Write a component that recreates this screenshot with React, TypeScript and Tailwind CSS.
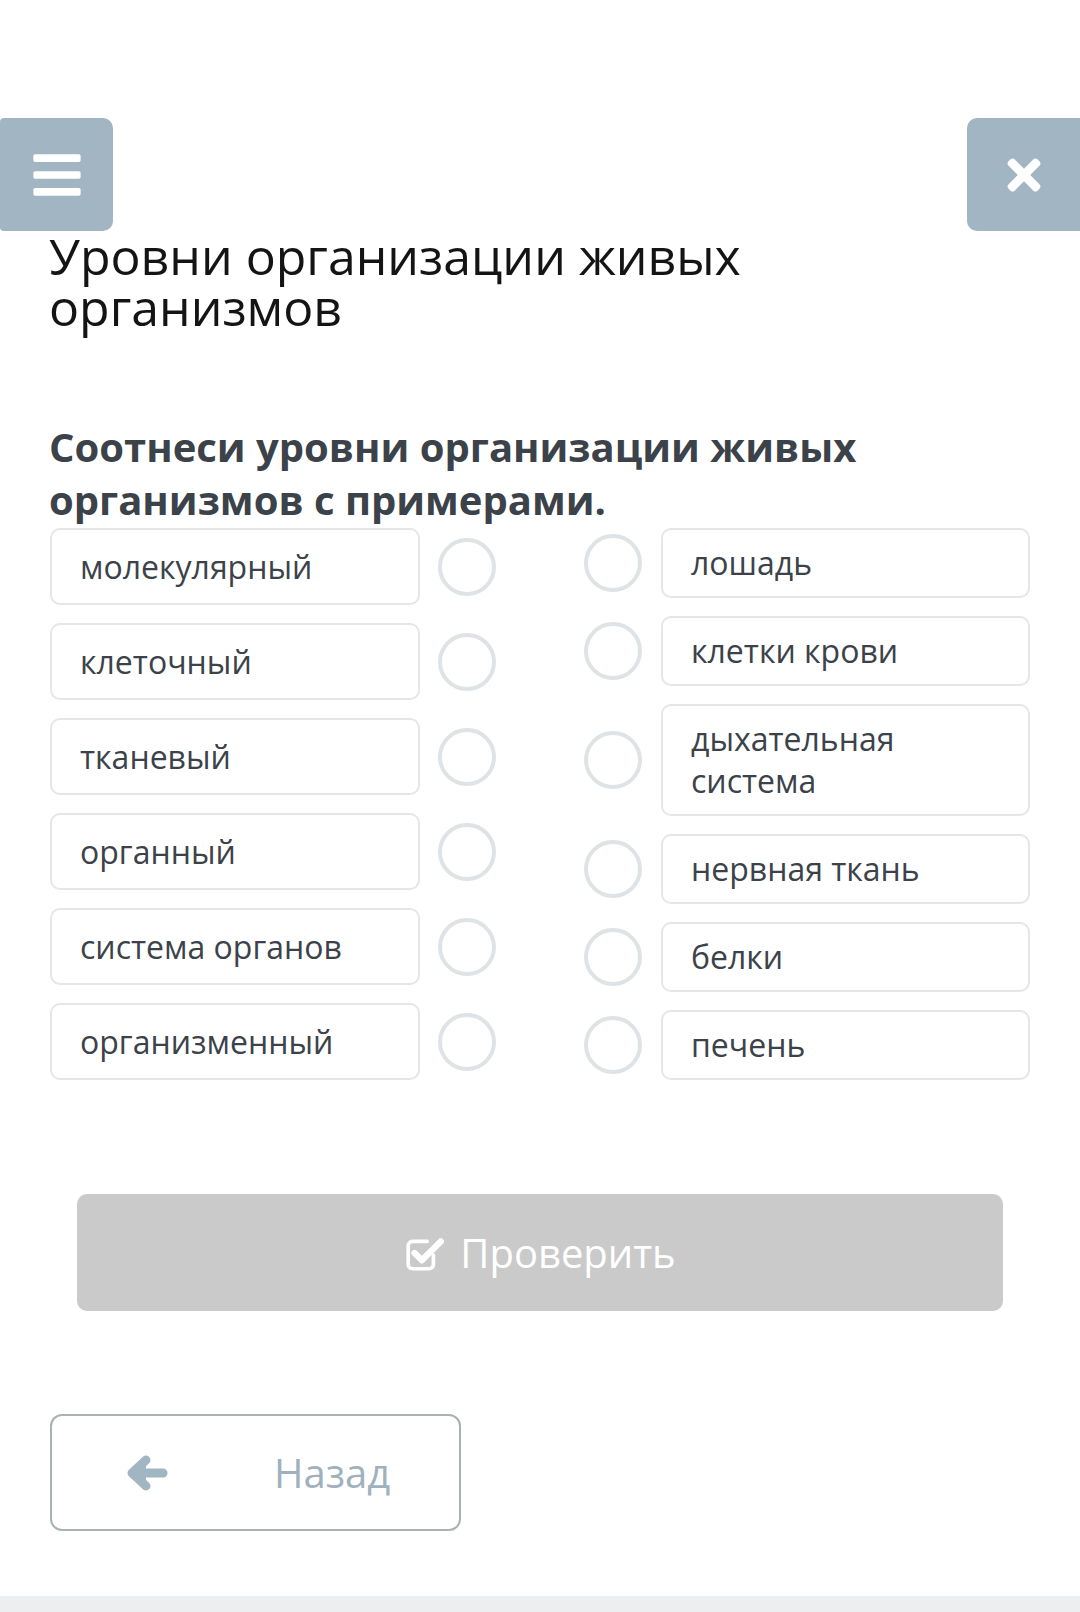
import { FaBars, FaTimes } from "react-icons/fa";

const leftItems = ["молекулярный", "клеточный", "тканевый", "органный", "система органов", "организменный"];
const rightItems = ["лошадь", "клетки крови", "дыхательная система", "нервная ткань", "белки", "печень"];

function Circle() {
  return <div className="w-[58px] h-[58px] shrink-0 rounded-full border-[4px] border-[#dfe3e6] bg-white" />;
}

function CheckSquareIcon() {
  return (
    <svg width="42" height="40" viewBox="0 0 40 38" fill="none">
      <path d="M28 21v9a4 4 0 0 1-4 4H8a4 4 0 0 1-4-4V12a4 4 0 0 1 4-4h14" stroke="white" strokeWidth="3.5" strokeLinecap="round" />
      <path d="M10 19l7 7L35 8" stroke="white" strokeWidth="6" strokeLinecap="round" strokeLinejoin="round" />
    </svg>
  );
}

// chunky fa4-style left arrow
function ArrowLeft() {
  return (
    <svg width="42" height="38" viewBox="0 0 42 38" className="ml-[74px]">
      <path d="M20 6 L6 19 L20 32" fill="#a1b5c3" stroke="#a1b5c3" strokeWidth="9" strokeLinecap="round" strokeLinejoin="round" />
      <path d="M10 19 H37" stroke="#a1b5c3" strokeWidth="9" strokeLinecap="round" />
    </svg>
  );
}

export default function App() {
  return (
    <div className="w-[1080px] min-h-[1612px] bg-white flex flex-col" style={{ fontFamily: '"Open Sans", "Noto Sans", sans-serif' }}>
      <div className="h-[118px]" />
      <div className="flex justify-between">
        <button className="w-[113px] h-[113px] bg-[#a1b5c3] rounded-r-[10px] rounded-l-[4px] flex items-center justify-center">
          <FaBars className="text-white text-[54px]" />
        </button>
        <button className="w-[113px] h-[113px] bg-[#a1b5c3] rounded-l-[10px] flex items-center justify-center">
          <FaTimes className="text-white text-[48px]" />
        </button>
      </div>
      <h1 className="px-[49px] text-[50px] leading-[51px] text-[#141414] font-normal">
        Уровни организации живых<br />организмов
      </h1>
      <h2 className="px-[49px] mt-[87px] text-[40px] leading-[53px] font-bold text-[#3c424a]">
        Соотнеси уровни организации живых<br />организмов с примерами.
      </h2>
      <div className="flex justify-between px-[50px] mt-[2px]">
        <div className="flex flex-col gap-[18px]">
          {leftItems.map((t) => (
            <div key={t} className="flex items-center gap-[18px]">
              <div className="w-[370px] h-[77px] border-2 border-[#e4e6e8] rounded-[10px] px-[28px] flex items-center text-[32px] text-[#3c424a]">
                {t}
              </div>
              <Circle />
            </div>
          ))}
        </div>
        <div className="flex flex-col gap-[18px]">
          {rightItems.map((t) => (
            <div key={t} className="flex items-center gap-[19px]">
              <Circle />
              <div className="w-[369px] min-h-[69px] border-2 border-[#e4e6e8] rounded-[10px] px-[28px] py-[12px] flex items-center text-[32px] leading-[42px] text-[#3c424a]">
                <span className="max-w-[250px]">{t}</span>
              </div>
            </div>
          ))}
        </div>
      </div>
      <div className="px-[77px] mt-[114px]">
        <button className="w-full h-[117px] bg-[#cacaca] rounded-[10px] flex items-center justify-center gap-[14px] text-white text-[40px]">
          <CheckSquareIcon />
          <span>Проверить</span>
        </button>
      </div>
      <div className="px-[50px] mt-[103px]">
        <button className="w-[411px] h-[117px] border-2 border-[#a9b1b3] rounded-[12px] flex items-center text-[#9fb1bd] text-[40px]">
          <ArrowLeft />
          <span className="ml-[106px]">Назад</span>
        </button>
      </div>
      <div className="flex-1 min-h-[65px]" />
      <div className="h-[16px] bg-[#eceef0]" />
    </div>
  );
}
